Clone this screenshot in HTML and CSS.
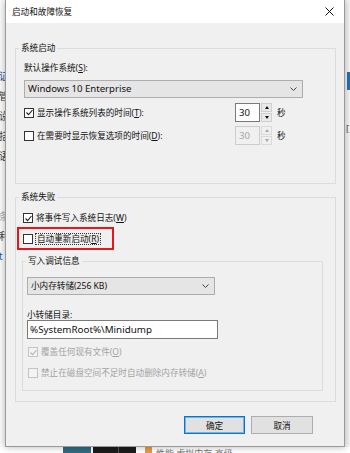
FILE: index.html
```html
<!DOCTYPE html>
<html lang="zh-CN">
<head>
    <meta charset="UTF-8">
    <meta name="viewport" content="width=device-width, initial-scale=1.0">
    <title>启动和故障恢复</title>
    <link rel="stylesheet" href="styles.css">
</head>
<body>
    <div class="screen">
        <div class="edge edge-left">
            <div class="ghost blue">证</div>
            <div class="ghost">管</div>
            <div class="ghost">设</div>
            <div class="ghost">括</div>
            <div class="ghost">语</div>
            <div class="ghost"></div>
            <div class="ghost"></div>
            <div class="ghost light">条</div>
            <div class="ghost">利</div>
            <div class="ghost blue">t</div>
        </div>

        <div class="dialog">
            <div class="titlebar">
                <span class="title">启动和故障恢复</span>
                <svg class="close" width="9" height="9" viewBox="0 0 9 9">
                    <path d="M0.5 0.5 L8.5 8.5 M8.5 0.5 L0.5 8.5" stroke="#111" stroke-width="1"/>
                </svg>
            </div>

            <div class="dialog-body">
                <fieldset class="group group-startup">
                    <legend>系统启动</legend>
                    <div class="field-label">默认操作系统(<u>S</u>):</div>
                    <div class="select select-os">
                        <span>Windows 10 Enterprise</span>
                        <svg class="chevron" width="7" height="4" viewBox="0 0 7 4">
                            <path d="M0.5 0.5 L3.5 3.5 L6.5 0.5" fill="none" stroke="#444" stroke-width="1"/>
                        </svg>
                    </div>

                    <div class="timer-row">
                        <label class="check">
                            <span class="box checked">
                                <svg width="7" height="7" viewBox="0 0 7 7"><path d="M0.5 3.5 L2.6 5.6 L6.5 1" fill="none" stroke="#222" stroke-width="1.1"/></svg>
                            </span>
                            <span>显示操作系统列表的时间(<u>T</u>):</span>
                        </label>
                        <div class="spin">
                            <span class="spin-value">30</span>
                            <span class="spin-buttons">
                                <span class="spin-btn"><i class="tri up"></i></span>
                                <span class="spin-btn"><i class="tri down"></i></span>
                            </span>
                        </div>
                        <span class="unit">秒</span>
                    </div>

                    <div class="timer-row row-second">
                        <label class="check">
                            <span class="box"></span>
                            <span>在需要时显示恢复选项的时间(<u>D</u>):</span>
                        </label>
                        <div class="spin disabled">
                            <span class="spin-value">30</span>
                            <span class="spin-buttons">
                                <span class="spin-btn"><i class="tri up"></i></span>
                                <span class="spin-btn"><i class="tri down"></i></span>
                            </span>
                        </div>
                        <span class="unit">秒</span>
                    </div>
                </fieldset>

                <fieldset class="group group-failure">
                    <legend>系统失败</legend>
                    <label class="check row-log">
                        <span class="box checked">
                            <svg width="7" height="7" viewBox="0 0 7 7"><path d="M0.5 3.5 L2.6 5.6 L6.5 1" fill="none" stroke="#222" stroke-width="1.1"/></svg>
                        </span>
                        <span>将事件写入系统日志(<u>W</u>)</span>
                    </label>

                    <div class="highlight">
                        <label class="check">
                            <span class="box"></span>
                            <span class="focus">自动重新启动(<u>R</u>)</span>
                        </label>
                    </div>

                    <fieldset class="group group-debug">
                        <legend>写入调试信息</legend>
                        <div class="select select-dump">
                            <span>小内存转储(256 KB)</span>
                            <svg class="chevron" width="7" height="4" viewBox="0 0 7 4">
                                <path d="M0.5 0.5 L3.5 3.5 L6.5 0.5" fill="none" stroke="#444" stroke-width="1"/>
                            </svg>
                        </div>
                        <div class="field-label dir-label">小转储目录:</div>
                        <div class="textbox">%SystemRoot%\Minidump</div>

                        <label class="check disabled row-overwrite">
                            <span class="box checked">
                                <svg width="7" height="7" viewBox="0 0 7 7"><path d="M0.5 3.5 L2.6 5.6 L6.5 1" fill="none" stroke="#b4b4b4" stroke-width="1.1"/></svg>
                            </span>
                            <span>覆盖任何现有文件(<u>O</u>)</span>
                        </label>
                        <label class="check disabled row-space">
                            <span class="box"></span>
                            <span>禁止在磁盘空间不足时自动删除内存转储(<u>A</u>)</span>
                        </label>
                    </fieldset>
                </fieldset>

                <div class="actions">
                    <button class="btn btn-default">确定</button>
                    <button class="btn">取消</button>
                </div>
            </div>
        </div>

        <div class="edge edge-right">
            <div class="accent-block"></div>
            <div class="bracket">[</div>
        </div>
    </div>

    <div class="taskstrip">
        <span class="tile tile-teal"></span>
        <span class="tile tile-dark"><span></span></span>
        <span class="tile-icon"></span>
        <span class="tile-text">性能  虚拟内存  高级</span>
    </div>
</body>
</html>
```

FILE: styles.css
```css
* {
    margin: 0;
    padding: 0;
    box-sizing: border-box;
}

body {
    font-family: "Noto Sans", "Noto Sans CJK SC", sans-serif;
    font-size: 8.6px;
    color: #111;
    background: #fafafa;
    width: 350px;
    height: 453px;
    overflow: hidden;
}

u {
    text-decoration: underline;
    text-underline-offset: 1px;
}

.screen {
    display: flex;
    height: 447px;
}

/* window behind the dialog */
.edge {
    width: 5px;
    overflow: hidden;
    flex-shrink: 0;
}

.edge-left {
    background: #fbfbfb;
    padding-top: 66px;
}

.ghost {
    height: 20px;
    line-height: 20px;
    font-size: 10px;
    color: #3a3a3a;
    text-indent: -1px;
    white-space: nowrap;
}

.ghost.blue {
    color: #1f4f9a;
}

.ghost.light {
    color: #b0b0b0;
}

.edge-right {
    background: #f4f4f4;
    padding-top: 72px;
}

.accent-block {
    margin-left: 2px;
    width: 3px;
    height: 18px;
    background: #1e73be;
}

.bracket {
    margin-top: 33px;
    margin-left: 1px;
    font-size: 9px;
    line-height: 12px;
    color: #555;
}

/* dialog */
.dialog {
    position: relative;
    z-index: 1;
    width: 340px;
    flex-shrink: 0;
    background: #f0f0f0;
    border: 1px solid #9a9a9a;
    border-top: none;
    box-shadow: 0 0 7px rgba(0, 0, 0, 0.3);
}

.titlebar {
    height: 23px;
    background: #fff;
    display: flex;
    align-items: center;
    justify-content: space-between;
    padding: 0 6px 0 6px;
}

.title {
    line-height: 12px;
    color: #111;
}

.close {
    margin-right: 4px;
}

.dialog-body {
    padding: 0 8px 12px 9px;
}

.group {
    border: 1px solid #dcdcdc;
    min-width: 0;
}

.group legend {
    line-height: 12px;
    padding: 0 2px;
}

.group-startup {
    margin-top: 19px;
    padding: 0 8px 38px 8px;
}

.group-startup legend {
    margin-left: -5px;
}

.group-failure {
    margin-top: 7px;
    padding: 0 8px 10px 7px;
}

.group-failure legend {
    margin-left: -4px;
}

.group-debug {
    margin-top: 5px;
    margin-left: -1px;
    width: 301px;
    padding: 0 4px 10px 4px;
}

.group-debug legend {
    margin-left: -1px;
}

.field-label {
    margin-top: 8px;
    line-height: 12px;
}

.select {
    display: flex;
    align-items: center;
    justify-content: space-between;
    height: 18px;
    background: #e5e5e5;
    border: 1px solid #adadad;
    padding: 0 5px 0 3px;
    line-height: 12px;
}

.select-os {
    margin-top: 6px;
    width: 279px;
    font-size: 9.6px;
}

.select-dump {
    margin-top: 10px;
    width: 188px;
}

.dir-label {
    margin-top: 16px;
    line-height: 9px;
}

.textbox {
    height: 19px;
    width: 191px;
    background: #fff;
    border: 1px solid #7a7a7a;
    padding-left: 2px;
    line-height: 17px;
    font-size: 9.8px;
    white-space: nowrap;
}

/* checkbox rows */
.check {
    display: flex;
    align-items: center;
    gap: 3px;
    height: 14px;
    line-height: 12px;
    white-space: nowrap;
}

.box {
    width: 10px;
    height: 10px;
    border: 1px solid #333;
    background: #fff;
    display: flex;
    align-items: center;
    justify-content: center;
    flex-shrink: 0;
}

.check.disabled {
    color: #a3a3a3;
}

.check.disabled .box {
    border-color: #c4c4c4;
    background: #f4f4f4;
}

.row-log {
    margin-top: 8px;
}

.highlight {
    margin-top: 2px;
    margin-left: -6px;
    width: 97px;
    height: 23px;
    border: 2px solid #e8161b;
    padding: 3px 0 0 4px;
}

.focus {
    outline: 1px dotted #333;
    outline-offset: 0;
    padding: 0 1px;
    line-height: 10px;
}

.row-overwrite {
    margin-top: 6px;
    margin-left: 1px;
}

.row-space {
    margin-top: 7px;
    margin-left: 1px;
}

/* timer rows with spin boxes */
.timer-row {
    display: grid;
    grid-template-columns: 206px 37px auto;
    column-gap: 5px;
    align-items: center;
    margin-top: 5px;
    height: 19px;
}

.timer-row.row-second {
    margin-top: 4px;
}

.spin {
    display: flex;
    height: 19px;
}

.spin-value {
    width: 26px;
    background: #fff;
    border: 1px solid #7a7a7a;
    padding-left: 3px;
    line-height: 17px;
    font-size: 9.6px;
}

.spin-buttons {
    display: flex;
    flex-direction: column;
    gap: 1px;
    width: 11px;
    margin-left: 1px;
}

.spin-btn {
    flex: 1;
    background: #e9e9e9;
    border: 1px solid #cfcfcf;
    display: flex;
    align-items: center;
    justify-content: center;
}

.tri {
    width: 0;
    height: 0;
    border-left: 2px solid transparent;
    border-right: 2px solid transparent;
}

.tri.up {
    border-bottom: 3px solid #111;
}

.tri.down {
    border-top: 3px solid #111;
}

.spin.disabled .spin-value {
    background: #f0f0f0;
    border-color: #cccccc;
    color: #a6a6a6;
}

.spin.disabled .spin-btn {
    background: #f0f0f0;
    border-color: #dadada;
}

.spin.disabled .tri.up {
    border-bottom-color: #a6a6a6;
}

.spin.disabled .tri.down {
    border-top-color: #a6a6a6;
}

.unit {
    line-height: 12px;
}

/* buttons */
.actions {
    display: flex;
    justify-content: flex-end;
    gap: 6px;
    margin-top: 14px;
    padding-right: 23px;
}

.btn {
    font-family: inherit;
    font-size: 8.6px;
    color: #111;
    height: 18px;
    width: 62px;
    background: #e1e1e1;
    border: 1px solid #adadad;
}

.btn-default {
    width: 61px;
    border-color: #0078d7;
    box-shadow: inset 0 0 0 1px rgba(0, 120, 215, 0.45);
}

/* strip below the dialog */
.taskstrip {
    display: flex;
    align-items: flex-start;
    height: 6px;
    background: #fff;
    padding-left: 63px;
    overflow: hidden;
}

.tile {
    height: 6px;
}

.tile-teal {
    width: 28px;
    background: #2f6c80;
}

.tile-dark {
    width: 43px;
    margin-left: 2px;
    background: #1c1c1c;
    display: flex;
}

.tile-dark span {
    width: 1px;
    margin-left: 25px;
    background: #555;
}

.tile-icon {
    width: 7px;
    height: 6px;
    margin-left: 9px;
    background: #e59a45;
}

.tile-text {
    margin-left: 4px;
    font-size: 9px;
    line-height: 12px;
    margin-top: 1px;
    color: #777;
}
```
